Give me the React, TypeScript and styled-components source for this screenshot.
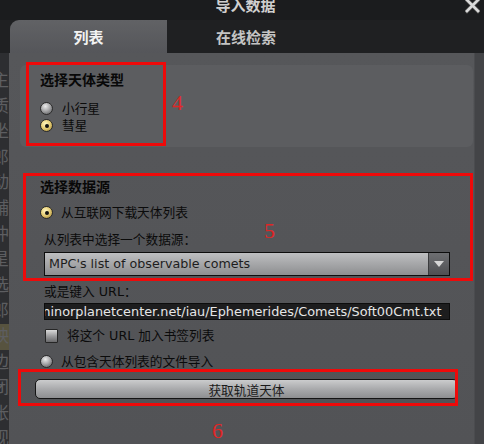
import React, { FC } from 'react'
import styled, { createGlobalStyle, css } from 'styled-components'

const GlobalStyle = createGlobalStyle`
  html, body {
    margin: 0;
    padding: 0;
    background: #1e1f21;
  }
  * {
    box-sizing: border-box;
  }
`

const FONT = `"DejaVu Sans", "Noto Sans CJK SC", sans-serif`

const Root = styled.div`
  position: relative;
  display: flex;
  flex-direction: column;
  width: 484px;
  height: 444px;
  overflow: hidden;
  background: #1e1f21;
  font-family: ${FONT};
  font-size: 12.7px;
  color: #0b0b0b;
`

const TitleBar = styled.div`
  display: grid;
  grid-template-columns: 1fr auto 1fr;
  align-items: start;
  height: 20px;
  background: #1b1c1e;
`

const Title = styled.div`
  grid-column: 2;
  padding-left: 7px;
  font-size: 15px;
  font-weight: bold;
  line-height: 13px;
  color: #cfcfcf;
`

const CloseButton = styled.div`
  grid-column: 3;
  justify-self: end;
  display: flex;
  margin-right: 4px;
`

const TabRow = styled.div`
  display: flex;
  height: 33px;
  padding-left: 10px;
  background: #1f2022;
`

const Tab = styled.div<{ $active?: boolean }>`
  display: flex;
  align-items: center;
  justify-content: center;
  width: 158px;
  font-size: 15px;
  font-weight: bold;
  color: #c4c4c4;
  ${({ $active }) =>
    $active &&
    css`
      width: 157px;
      border-radius: 9px 0 0 0;
      background: linear-gradient(#616265, #55565a);
      color: #f2f2f2;
    `}
`

const Body = styled.div`
  display: flex;
  flex: 1;
  min-height: 0;
`

const BehindStrip = styled.div`
  display: flex;
  flex-direction: column;
  flex: none;
  width: 9px;
  padding-top: 15px;
  overflow: hidden;
  background: #2d2e31;
`

const GhostChar = styled.div<{ $highlight?: boolean }>`
  flex: none;
  width: 20px;
  height: 25.6px;
  margin-left: -9px;
  padding-left: 1px;
  font-size: 17px;
  line-height: 25.6px;
  color: #5d5e61;
  background: ${({ $highlight }) => ($highlight ? '#57533f' : 'transparent')};
`

const Panel = styled.div`
  display: flex;
  flex-direction: column;
  flex: 1;
  padding: 12px 1px 0 11px;
  background: linear-gradient(#56575a, #525356);
`

const EdgeStrip = styled.div`
  width: 10px;
  background: #434447;
  border-left: 1px solid #4b4c4f;
`

const GroupBox = styled.div`
  display: flex;
  flex-direction: column;
  padding: 7px 20px 13px;
  border-radius: 6px;
  background: #5c5d60;
`

const GroupTitle = styled.div`
  font-size: 14px;
  font-weight: bold;
  line-height: 16px;
  color: #080808;
`

const RadioList = styled.div`
  display: flex;
  flex-direction: column;
  margin-top: 12px;
`

const OptionRow = styled.div<{ $gap?: number; $top?: number }>`
  display: flex;
  align-items: center;
  gap: ${({ $gap }) => $gap ?? 9}px;
  height: 17px;
  margin-top: ${({ $top }) => $top ?? 0}px;
`

const RadioDot = styled.span<{ $checked?: boolean }>`
  position: relative;
  flex: none;
  width: 13px;
  height: 13px;
  border-radius: 50%;
  border: 1px solid #2b2b2b;
  background: ${({ $checked }) =>
    $checked
      ? 'radial-gradient(circle at 40% 35%, #fff6c0 0%, #e8d07a 45%, #9a7c28 100%)'
      : 'radial-gradient(circle at 40% 30%, #ececec 0%, #a9a9ab 45%, #4f5052 100%)'};

  ${({ $checked }) =>
    $checked &&
    css`
      &::after {
        content: '';
        position: absolute;
        left: 3.5px;
        top: 3.5px;
        width: 4px;
        height: 4px;
        border-radius: 50%;
        background: #111;
      }
    `}
`

const OptionText = styled.span`
  line-height: 17px;
  white-space: nowrap;
`

const Section = styled.div`
  display: flex;
  flex-direction: column;
  margin-top: 32px;
  padding-left: 20px;
`

const SubBlock = styled.div`
  display: flex;
  flex-direction: column;
  margin-left: 4px;
`

const FieldLabel = styled.div<{ $top: number }>`
  margin-top: ${({ $top }) => $top}px;
  line-height: 16px;
`

const ComboBox = styled.div`
  display: flex;
  align-items: stretch;
  width: 406px;
  height: 24px;
  margin-top: 4px;
  border: 1px solid #0d0d0d;
  background: linear-gradient(#bebfc1, #a3a4a6 55%, #8d8e90);
`

const ComboText = styled.div`
  flex: 1;
  padding-left: 4px;
  line-height: 22px;
  color: #1d1d1d;
`

const ComboArrow = styled.div`
  display: flex;
  align-items: center;
  justify-content: center;
  width: 21px;
  border-left: 1px solid #3a3b3d;
  background: linear-gradient(#6e6f72, #4e4f52);
`

const UrlField = styled.div`
  width: 406px;
  height: 17px;
  margin-top: 3px;
  overflow: hidden;
  border: 1px solid #0c0c0c;
  background: #1d1d1e;
`

const UrlText = styled.div`
  margin-left: -7px;
  font-size: 12.85px;
  line-height: 15px;
  white-space: nowrap;
  color: #e6e6e6;
`

const CheckBox = styled.span`
  flex: none;
  width: 13px;
  height: 14px;
  margin-left: 1px;
  border: 1px solid #262626;
  border-radius: 1px;
  background: linear-gradient(#dadada, #9c9c9e 50%, #69696b);
`

const ActionButton = styled.div`
  display: flex;
  align-items: center;
  justify-content: center;
  width: 423px;
  height: 20px;
  margin: 9px 0 0 15px;
  border: 1px solid #141414;
  border-radius: 5px;
  background: linear-gradient(#cbcccd, #a9aaac 50%, #8e8f91);
  color: #1a1a1a;
`

const Annotation = styled.div<{ $left: number; $top: number; $w: number; $h: number }>`
  position: absolute;
  left: ${({ $left }) => $left}px;
  top: ${({ $top }) => $top}px;
  width: ${({ $w }) => $w}px;
  height: ${({ $h }) => $h}px;
  border: 3px solid #ee0a0a;
  pointer-events: none;
`

const AnnotationNumber = styled.div<{ $left: number; $top: number }>`
  position: absolute;
  left: ${({ $left }) => $left}px;
  top: ${({ $top }) => $top}px;
  font-family: 'Liberation Serif', serif;
  font-size: 22px;
  line-height: 22px;
  color: #e02626;
`

const ghostChars = ['主', '质', '坐', '郎', '动', '辅', '冲', '星', '选', '郎', '映', '边', '闭', '帐', '视']

const CloseIcon: FC = () => (
  <svg width="15" height="14" viewBox="0 0 15 14">
    <path d="M2 0 L13 11 M13 0 L2 11" stroke="#3a3a3a" strokeWidth="4.4" strokeLinecap="square" />
    <path d="M2 0 L13 11 M13 0 L2 11" stroke="#d9d9d9" strokeWidth="2.8" strokeLinecap="square" />
  </svg>
)

const ArrowDown: FC = () => (
  <svg width="10" height="6" viewBox="0 0 10 6">
    <path d="M0 0 H10 L5 6 Z" fill="#d6d6d6" />
  </svg>
)

export default function App() {
  return (
    <>
      <GlobalStyle />
      <Root>
        <TitleBar>
          <Title>导入数据</Title>
          <CloseButton>
            <CloseIcon />
          </CloseButton>
        </TitleBar>

        <TabRow>
          <Tab $active>列表</Tab>
          <Tab>在线检索</Tab>
        </TabRow>

        <Body>
          <BehindStrip>
            {ghostChars.map((ch, i) => (
              <GhostChar key={i} $highlight={i === 10}>
                {ch}
              </GhostChar>
            ))}
          </BehindStrip>

          <Panel>
            <GroupBox>
              <GroupTitle>选择天体类型</GroupTitle>
              <RadioList>
                <OptionRow>
                  <RadioDot />
                  <OptionText>小行星</OptionText>
                </OptionRow>
                <OptionRow>
                  <RadioDot $checked />
                  <OptionText>彗星</OptionText>
                </OptionRow>
              </RadioList>
            </GroupBox>

            <Section>
              <GroupTitle>选择数据源</GroupTitle>
              <OptionRow $top={9} $gap={8}>
                <RadioDot $checked />
                <OptionText>从互联网下载天体列表</OptionText>
              </OptionRow>

              <SubBlock>
                <FieldLabel $top={11}>从列表中选择一个数据源：</FieldLabel>
                <ComboBox>
                  <ComboText>MPC's list of observable comets</ComboText>
                  <ComboArrow>
                    <ArrowDown />
                  </ComboArrow>
                </ComboBox>

                <FieldLabel $top={8}>或是键入 URL：</FieldLabel>
                <UrlField>
                  <UrlText>minorplanetcenter.net/iau/Ephemerides/Comets/Soft00Cmt.txt</UrlText>
                </UrlField>

                <OptionRow $top={7} $gap={9}>
                  <CheckBox />
                  <OptionText>将这个 URL 加入书签列表</OptionText>
                </OptionRow>
              </SubBlock>

              <OptionRow $top={9} $gap={8}>
                <RadioDot />
                <OptionText>从包含天体列表的文件导入</OptionText>
              </OptionRow>
            </Section>

            <ActionButton>获取轨道天体</ActionButton>
          </Panel>

          <EdgeStrip />
        </Body>

        <Annotation $left={26} $top={62} $w={140} $h={84} />
        <AnnotationNumber $left={172} $top={92}>4</AnnotationNumber>
        <Annotation $left={23} $top={173} $w={450} $h={108} />
        <AnnotationNumber $left={264} $top={220}>5</AnnotationNumber>
        <Annotation $left={18} $top={369} $w={440} $h={37} />
        <AnnotationNumber $left={212} $top={420}>6</AnnotationNumber>
      </Root>
    </>
  )
}
